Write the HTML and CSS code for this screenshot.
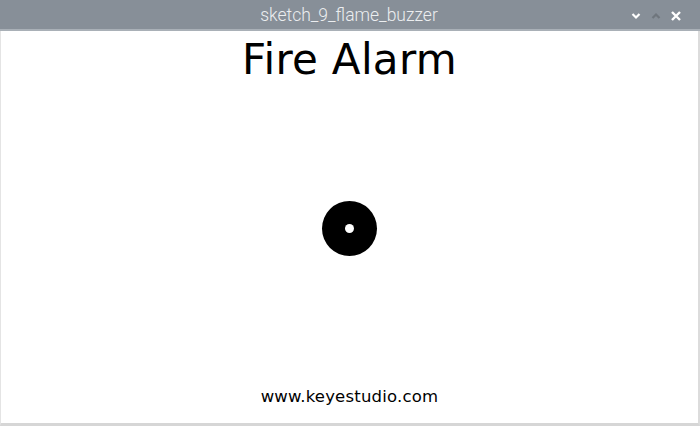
FILE: index.html
```html
<!DOCTYPE html>
<html>
<head>
<meta charset="utf-8">
<link rel="stylesheet" href="styles.css">
</head>
<body>
<div class="window">
  <div class="titlebar">
    <span class="title">sketch_9_flame_buzzer</span>
    <div class="controls">
      <svg class="ctl" width="12" height="10" viewBox="0 0 12 10"><path d="M2.5 3 L6 6.5 L9.5 3" fill="none" stroke="#ffffff" stroke-width="2.2"/></svg>
      <svg class="ctl" width="12" height="10" viewBox="0 0 12 10"><path d="M2.5 7 L6 3.5 L9.5 7" fill="none" stroke="#6f767d" stroke-width="2.2"/></svg>
      <svg class="ctl" width="12" height="12" viewBox="0 0 12 12"><path d="M2 2 L10 10 M10 2 L2 10" fill="none" stroke="#ffffff" stroke-width="2.4"/></svg>
    </div>
  </div>
  <div class="canvas">
    <h1 class="heading">Fire Alarm</h1>
    <div class="middle">
      <div class="dot"><div class="hole"></div></div>
    </div>
    <div class="footer">www.keyestudio.com</div>
  </div>
</div>
</body>
</html>
```
FILE: styles.css
```css
html, body {
  margin: 0;
  padding: 0;
  width: 700px;
  height: 426px;
  overflow: hidden;
  background: #ffffff;
}
.window {
  width: 700px;
  height: 426px;
  display: flex;
  flex-direction: column;
  box-sizing: border-box;
}
.titlebar {
  height: 31px;
  background: #878f98;
  border-bottom: 2px solid #a9b0b7;
  box-sizing: border-box;
  display: flex;
  align-items: center;
  justify-content: center;
  position: relative;
}
.title {
  font-family: Roboto, "Liberation Sans", sans-serif;
  font-weight: 300;
  font-size: 17.5px;
  color: #eceef0;
  margin-left: -2px;
}
.controls {
  position: absolute;
  right: 18px;
  top: 10px;
  display: flex;
  gap: 8px;
  align-items: center;
}
.canvas {
  flex: 1;
  display: flex;
  flex-direction: column;
  align-items: center;
  border-left: 1px solid #e4e4e4;
  border-right: 2px solid #dcdcdc;
  border-bottom: 3px solid #d6d6d6;
}
.heading {
  margin: 3px 0 0 0;
  font-family: "DejaVu Sans", sans-serif;
  font-weight: normal;
  font-size: 42px;
  line-height: 52px;
  color: #000;
  letter-spacing: 0.3px;
}
.middle {
  flex: 1;
  display: flex;
  align-items: center;
  justify-content: center;
  width: 100%;
  padding-bottom: 16px;
}
.dot {
  width: 55px;
  height: 55px;
  border-radius: 50%;
  background: #000;
  display: flex;
  align-items: center;
  justify-content: center;
}
.hole {
  width: 9px;
  height: 9px;
  border-radius: 50%;
  background: #fff;
}
.footer {
  font-family: "DejaVu Sans", sans-serif;
  font-size: 16.5px;
  color: #000;
  margin-bottom: 17px;
  letter-spacing: 0.2px;
}
```
